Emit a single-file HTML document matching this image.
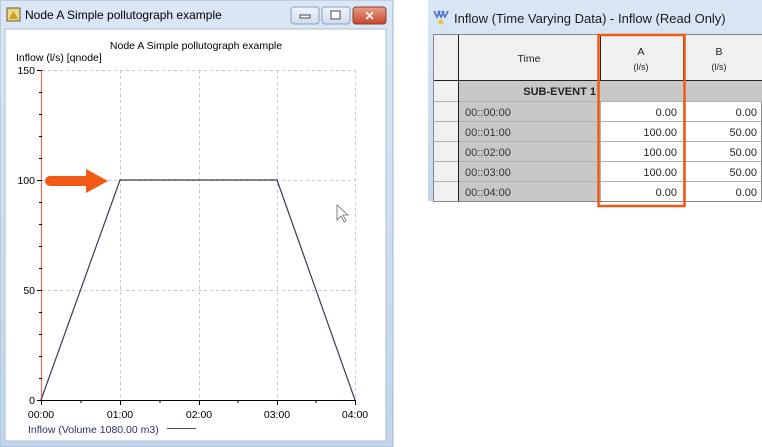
<!DOCTYPE html>
<html><head><meta charset="utf-8"><style>
body{margin:0;width:762px;height:447px;background:#fff;overflow:hidden;font-family:"Liberation Sans",sans-serif;position:relative}
.t{position:absolute;font-size:11px;color:#000;white-space:nowrap}
</style></head><body>
<svg width="762" height="447" style="position:absolute;left:0;top:0" font-family="Liberation Sans, sans-serif">
<defs>
<linearGradient id="tb" x1="0" y1="0" x2="0" y2="1"><stop offset="0" stop-color="#dbe7f5"/><stop offset="1" stop-color="#c3d6ec"/></linearGradient>
<linearGradient id="cl" x1="0" y1="0" x2="0" y2="1"><stop offset="0" stop-color="#e8a08c"/><stop offset="1" stop-color="#c9452a"/></linearGradient>
<linearGradient id="bt" x1="0" y1="0" x2="0" y2="1"><stop offset="0" stop-color="#f2f6fb"/><stop offset="1" stop-color="#cfdcec"/></linearGradient>
</defs>
<!-- left window -->
<rect x="0" y="0" width="393" height="447" fill="url(#tb)"/>
<rect x="0" y="0" width="393" height="447" fill="none" stroke="#9fb6d1"/>
<rect x="5" y="29" width="381" height="412" fill="#fff" stroke="#a8bcd4"/>
<rect x="7" y="8" width="13" height="13" fill="#e9d98a" stroke="#6d5a20"/>
<path d="M9 19 L13.5 11 L18 19 Z" fill="#c9a227"/>
<text x="25" y="19" font-size="12" fill="#000">Node A Simple pollutograph example</text>
<rect x="291" y="7" width="28" height="17" rx="3" fill="url(#bt)" stroke="#8a9fb9"/>
<rect x="300" y="15" width="10" height="3" fill="#fff" stroke="#445"/>
<rect x="322" y="7" width="28" height="17" rx="3" fill="url(#bt)" stroke="#8a9fb9"/>
<rect x="331" y="11" width="9" height="8" fill="#fff" stroke="#445"/>
<rect x="353" y="7" width="33" height="17" rx="3" fill="url(#cl)" stroke="#8a3b2a"/>
<text x="369.5" y="20" font-size="12" font-weight="bold" fill="#fff" text-anchor="middle">✕</text>
<!-- plot -->
<text x="196" y="49" font-size="10.5" text-anchor="middle">Node A Simple pollutograph example</text>
<text x="16" y="61" font-size="10.5">Inflow (l/s) [qnode]</text>
<g stroke="#c8c8c8" stroke-dasharray="3,3" stroke-width="1">
<line x1="42" y1="70.5" x2="356" y2="70.5"/><line x1="42" y1="180.5" x2="356" y2="180.5"/><line x1="42" y1="290.5" x2="356" y2="290.5"/>
<line x1="120.5" y1="70" x2="120.5" y2="400"/><line x1="199.5" y1="70" x2="199.5" y2="400"/><line x1="277.5" y1="70" x2="277.5" y2="400"/><line x1="355.5" y1="70" x2="355.5" y2="400"/>
</g>
<line x1="41.5" y1="70" x2="41.5" y2="401" stroke="#e07a6a" stroke-width="1.3"/>
<g stroke="#000" stroke-width="1">
<line x1="37" y1="70.5" x2="42" y2="70.5"/><line x1="37" y1="180.5" x2="42" y2="180.5"/><line x1="37" y1="290.5" x2="42" y2="290.5"/><line x1="37" y1="400.5" x2="42" y2="400.5"/>
<line x1="39" y1="92.5" x2="42" y2="92.5"/><line x1="39" y1="114.5" x2="42" y2="114.5"/><line x1="39" y1="136.5" x2="42" y2="136.5"/><line x1="39" y1="158.5" x2="42" y2="158.5"/>
<line x1="39" y1="202.5" x2="42" y2="202.5"/><line x1="39" y1="224.5" x2="42" y2="224.5"/><line x1="39" y1="246.5" x2="42" y2="246.5"/><line x1="39" y1="268.5" x2="42" y2="268.5"/>
<line x1="39" y1="312.5" x2="42" y2="312.5"/><line x1="39" y1="334.5" x2="42" y2="334.5"/><line x1="39" y1="356.5" x2="42" y2="356.5"/><line x1="39" y1="378.5" x2="42" y2="378.5"/>
<line x1="41" y1="400.5" x2="356" y2="400.5"/>
<line x1="41.5" y1="400" x2="41.5" y2="405"/><line x1="120.5" y1="400" x2="120.5" y2="405"/><line x1="199.5" y1="400" x2="199.5" y2="405"/><line x1="277.5" y1="400" x2="277.5" y2="405"/><line x1="355.5" y1="400" x2="355.5" y2="405"/>
<line x1="81" y1="400" x2="81" y2="403"/><line x1="160" y1="400" x2="160" y2="403"/><line x1="238" y1="400" x2="238" y2="403"/><line x1="316" y1="400" x2="316" y2="403"/>
</g>
<g font-size="10.5" text-anchor="end"><text x="35" y="74">150</text><text x="35" y="184">100</text><text x="35" y="294">50</text><text x="35" y="404">0</text></g>
<g font-size="10.5" text-anchor="middle"><text x="41" y="418">00:00</text><text x="120" y="418">01:00</text><text x="199" y="418">02:00</text><text x="277" y="418">03:00</text><text x="355" y="418">04:00</text></g>
<text x="28" y="433" font-size="10.5" fill="#2e2e6e">Inflow (Volume 1080.00 m3)</text>
<line x1="167" y1="428.5" x2="196" y2="428.5" stroke="#4a4a7a"/>
<polyline points="41,400 120,180 277,180 355,400" fill="none" stroke="#3a3a5a" stroke-width="1.2"/>
<path d="M50 176 L86 176 L86 169 L108 181 L86 193 L86 186 L50 186 A5 5 0 0 1 50 176 Z" fill="#f05a14"/>
<path d="M337 205 L337 220 L341 216 L344 222 L346 221 L343 215 L348 215 Z" fill="#fff" stroke="#666" stroke-width="0.8"/>
<!-- right panel -->
<rect x="428" y="0" width="334" height="201" fill="url(#tb)"/>
<g transform="translate(432,9)"><path d="M2 2 L5 8 L8 2 M6 2 L9 8 L12 2 M10 2 L13 8 L16 2" stroke="#4a6fd0" stroke-width="1.6" fill="none"/><circle cx="9" cy="13" r="2.5" fill="#f0c040"/></g>
<text x="454" y="23" font-size="13" fill="#1a1a1a">Inflow (Time Varying Data) - Inflow (Read Only)</text>
<rect x="433.5" y="34.5" width="328" height="167" fill="#fff" stroke="#888"/>
<rect x="434" y="35" width="24" height="166" fill="#f0f0f0"/>
<rect x="458" y="35" width="304" height="45" fill="#f0f0f0"/>
<rect x="458" y="80" width="304" height="21" fill="#c8c8c8"/>
<rect x="458" y="101" width="142" height="100" fill="#c8c8c8"/>
<g stroke="#b0b0b0"><line x1="434" y1="101.5" x2="762" y2="101.5"/><line x1="434" y1="121.5" x2="762" y2="121.5"/><line x1="434" y1="141.5" x2="762" y2="141.5"/><line x1="434" y1="161.5" x2="762" y2="161.5"/><line x1="434" y1="181.5" x2="762" y2="181.5"/>
<line x1="683.5" y1="101" x2="683.5" y2="201"/><line x1="600.5" y1="101" x2="600.5" y2="201"/></g>
<g stroke="#222"><line x1="434" y1="80.5" x2="762" y2="80.5"/><line x1="458.5" y1="35" x2="458.5" y2="201"/><line x1="600.5" y1="35" x2="600.5" y2="80"/><line x1="683.5" y1="35" x2="683.5" y2="80"/></g>
<g font-size="10.5" fill="#222" text-anchor="middle"><text x="529" y="62">Time</text><text x="641" y="55">A</text><text x="641" y="70" font-size="9">(l/s)</text><text x="719" y="55">B</text><text x="719" y="70" font-size="9">(l/s)</text></g>
<text x="596" y="95" font-size="11" font-weight="bold" text-anchor="end" fill="#222">SUB-EVENT 1</text>
<g font-size="11" fill="#333"><text x="465" y="116">00::00:00</text><text x="465" y="136">00::01:00</text><text x="465" y="156">00::02:00</text><text x="465" y="176">00::03:00</text><text x="465" y="196">00::04:00</text></g>
<g font-size="11" fill="#222" text-anchor="end"><text x="677" y="116">0.00</text><text x="677" y="136">100.00</text><text x="677" y="156">100.00</text><text x="677" y="176">100.00</text><text x="677" y="196">0.00</text>
<text x="757" y="116">0.00</text><text x="757" y="136">50.00</text><text x="757" y="156">50.00</text><text x="757" y="176">50.00</text><text x="757" y="196">0.00</text></g>
<rect x="598.5" y="35" width="86" height="171" fill="none" stroke="#f05a14" stroke-width="2.5"/>
</svg>
</body></html>
